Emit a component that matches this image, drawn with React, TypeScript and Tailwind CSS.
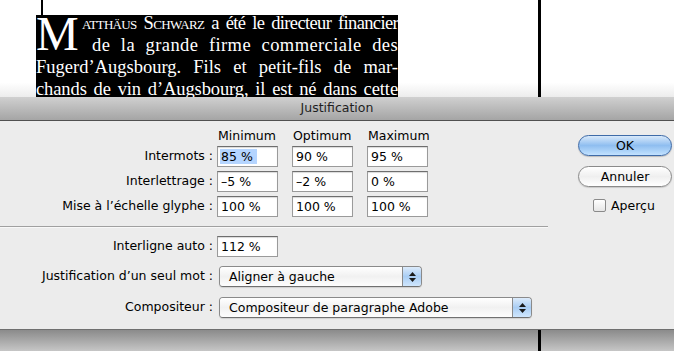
import React from "react";

const ui = "font-['DejaVu_Sans',sans-serif] text-[12.5px] text-black";

function Field({ value, selected }: { value: string; selected?: boolean }) {
  return (
    <div className="w-[61px] h-[21px] bg-white border border-[#9a9a9a] border-t-[#6e6e6e] shadow-[inset_0_1px_1px_rgba(0,0,0,0.15)] flex items-center pl-[2px] leading-[15px]">
      <span className={selected ? "bg-[#b5d5ff] pl-[1px] pr-[4px]" : "pl-[1px]"}>{value}</span>
    </div>
  );
}

function Popup({ width, label }: { width: string; label: string }) {
  return (
    <div
      className={`${width} h-[21px] rounded-[4px] border border-[#8a8a8a] border-b-[#707070] flex overflow-hidden shadow-[0_1px_1px_rgba(0,0,0,0.12)]`}
    >
      <div className="flex-1 bg-gradient-to-b from-white via-[#f1f1f1] to-[#fdfdfd] flex items-center pl-[9px] leading-[15px]">
        {label}
      </div>
      <div className="w-[19px] border-l border-[#8a8a8a] bg-gradient-to-b from-[#dcebfb] via-[#a9cdf3] to-[#cfe6fd] flex flex-col items-center justify-center gap-[2px]">
        <svg width="7" height="4" viewBox="0 0 7 4">
          <path d="M3.5 0 L7 4 L0 4 Z" fill="#1a1a1a" />
        </svg>
        <svg width="7" height="4" viewBox="0 0 7 4">
          <path d="M0 0 L7 0 L3.5 4 Z" fill="#1a1a1a" />
        </svg>
      </div>
    </div>
  );
}

function Row({ label, values, sel }: { label: string; values: string[]; sel?: boolean }) {
  return (
    <div className="flex items-center h-[21px]">
      <div className="w-[214px] text-right pr-[1px] whitespace-nowrap">{label}</div>
      <div className="ml-[3px] flex gap-[14px]">
        {values.map((v, i) => (
          <Field key={i} value={v} selected={sel && i === 0} />
        ))}
      </div>
    </div>
  );
}

export default function App() {
  return (
    <div className="w-[674px] h-[351px] overflow-hidden bg-white flex flex-col">
      {/* document behind the dialog */}
      <div className="h-[97px] flex shrink-0 bg-gradient-to-b from-white from-85% to-[#ececec]">
        <div className="w-[36px]" />
        <div className="w-[362px] flex flex-col">
          <div className="h-[15px] ml-[5px] w-[2px] bg-black shrink-0" />
          <div className="flex-1 bg-black text-white font-['Liberation_Serif',serif] text-[18.5px] leading-[22px]">
            <div className="-mt-[3px] flex">
              <div className="w-[46px] h-[44px] text-[48px] leading-[44px] shrink-0">M</div>
              <div className="w-[316px]">
                <div className="text-justify [text-align-last:justify] whitespace-nowrap tracking-[-0.65px]">
                  <span className="[font-variant-caps:small-caps]">atthäus Schwarz</span> a été le directeur financier
                </div>
                <div className="pl-[10px] text-justify [text-align-last:justify] tracking-[0.4px]">
                  de la grande firme commerciale des
                </div>
              </div>
            </div>
            <div className="text-justify [text-align-last:justify]">Fugerd’Augsbourg. Fils et petit-fils de mar-</div>
            <div className="text-justify [text-align-last:justify] whitespace-nowrap tracking-[-0.1px]">chands de vin d’Augsbourg, il est né dans cette</div>
          </div>
        </div>
        <div className="w-[140px]" />
        <div className="w-[3px] bg-black" />
      </div>

      {/* dialog */}
      <div className={`${ui} shrink-0 relative`}>
        <div className="h-[24px] bg-gradient-to-b from-[#d0d0d0] to-[#a5a5a5] border-b border-[#505050] flex items-center justify-center text-[#1e1e1e]">
          Justification
        </div>
        <div className="h-[209px] bg-[#ececec] border-b border-[#6f6f6f] flex">
          <div className="w-[548px] flex flex-col">
            <div className="pt-[7px] flex">
              <div className="w-[217px]" />
              <div className="flex gap-[14px] leading-[15px]">
                <div className="w-[61px] pl-[1px]">Minimum</div>
                <div className="w-[61px] pl-[1px]">Optimum</div>
                <div className="w-[61px] pl-[1px]">Maximum</div>
              </div>
            </div>
            <div className="mt-[3px] flex flex-col gap-[4px]">
              <Row label="Intermots :" values={["85 %", "90 %", "95 %"]} sel />
              <Row label="Interlettrage :" values={["–5 %", "–2 %", "0 %"]} />
              <Row label="Mise à l’échelle glyphe :" values={["100 %", "100 %", "100 %"]} />
            </div>
            <div className="mt-[9px] h-[1px] bg-[#a0a0a0] border-b border-[#f8f8f8] box-content" />
            <div className="mt-[8px] flex items-center h-[21px]">
              <div className="w-[214px] text-right pr-[1px]">Interligne auto :</div>
              <div className="ml-[3px]">
                <Field value="112 %" />
              </div>
            </div>
            <div className="mt-[9px] flex items-center h-[21px]">
              <div className="w-[214px] text-right pr-[1px] whitespace-nowrap">Justification d’un seul mot :</div>
              <div className="ml-[5px]">
                <Popup width="w-[203px]" label="Aligner à gauche" />
              </div>
            </div>
            <div className="mt-[10px] flex items-center h-[21px]">
              <div className="w-[214px] text-right pr-[1px]">Compositeur :</div>
              <div className="ml-[5px]">
                <Popup width="w-[313px]" label="Compositeur de paragraphe Adobe" />
              </div>
            </div>
          </div>
          <div className="flex-1 flex flex-col pl-[30px] pt-[14px]">
            <div className="w-[94px] h-[21px] rounded-full border border-[#3f6ba8] bg-gradient-to-b from-[#d8e9fa] via-[#8fbef0] to-[#c2e2ff] flex items-center justify-center leading-[15px] shadow-[0_1px_1px_rgba(0,0,0,0.2)]">
              OK
            </div>
            <div className="mt-[10px] w-[94px] h-[21px] rounded-full border border-[#8a8a8a] bg-gradient-to-b from-white via-[#efefef] to-white flex items-center justify-center leading-[15px] shadow-[0_1px_1px_rgba(0,0,0,0.15)]">
              Annuler
            </div>
            <div className="mt-[11px] ml-[15px] flex items-center gap-[5px] leading-[15px]">
              <div className="w-[13px] h-[13px] rounded-[2px] border border-[#8a8a8a] bg-gradient-to-b from-white to-[#e6e6e6]" />
              <span>Aperçu</span>
            </div>
          </div>
        </div>
      </div>

      {/* shadow below dialog */}
      <div className="flex-1 flex bg-gradient-to-b from-[#8b8b8b] to-[#c6c6c6]">
        <div className="w-[538px]" />
        <div className="w-[3px] bg-black" />
      </div>
    </div>
  );
}
